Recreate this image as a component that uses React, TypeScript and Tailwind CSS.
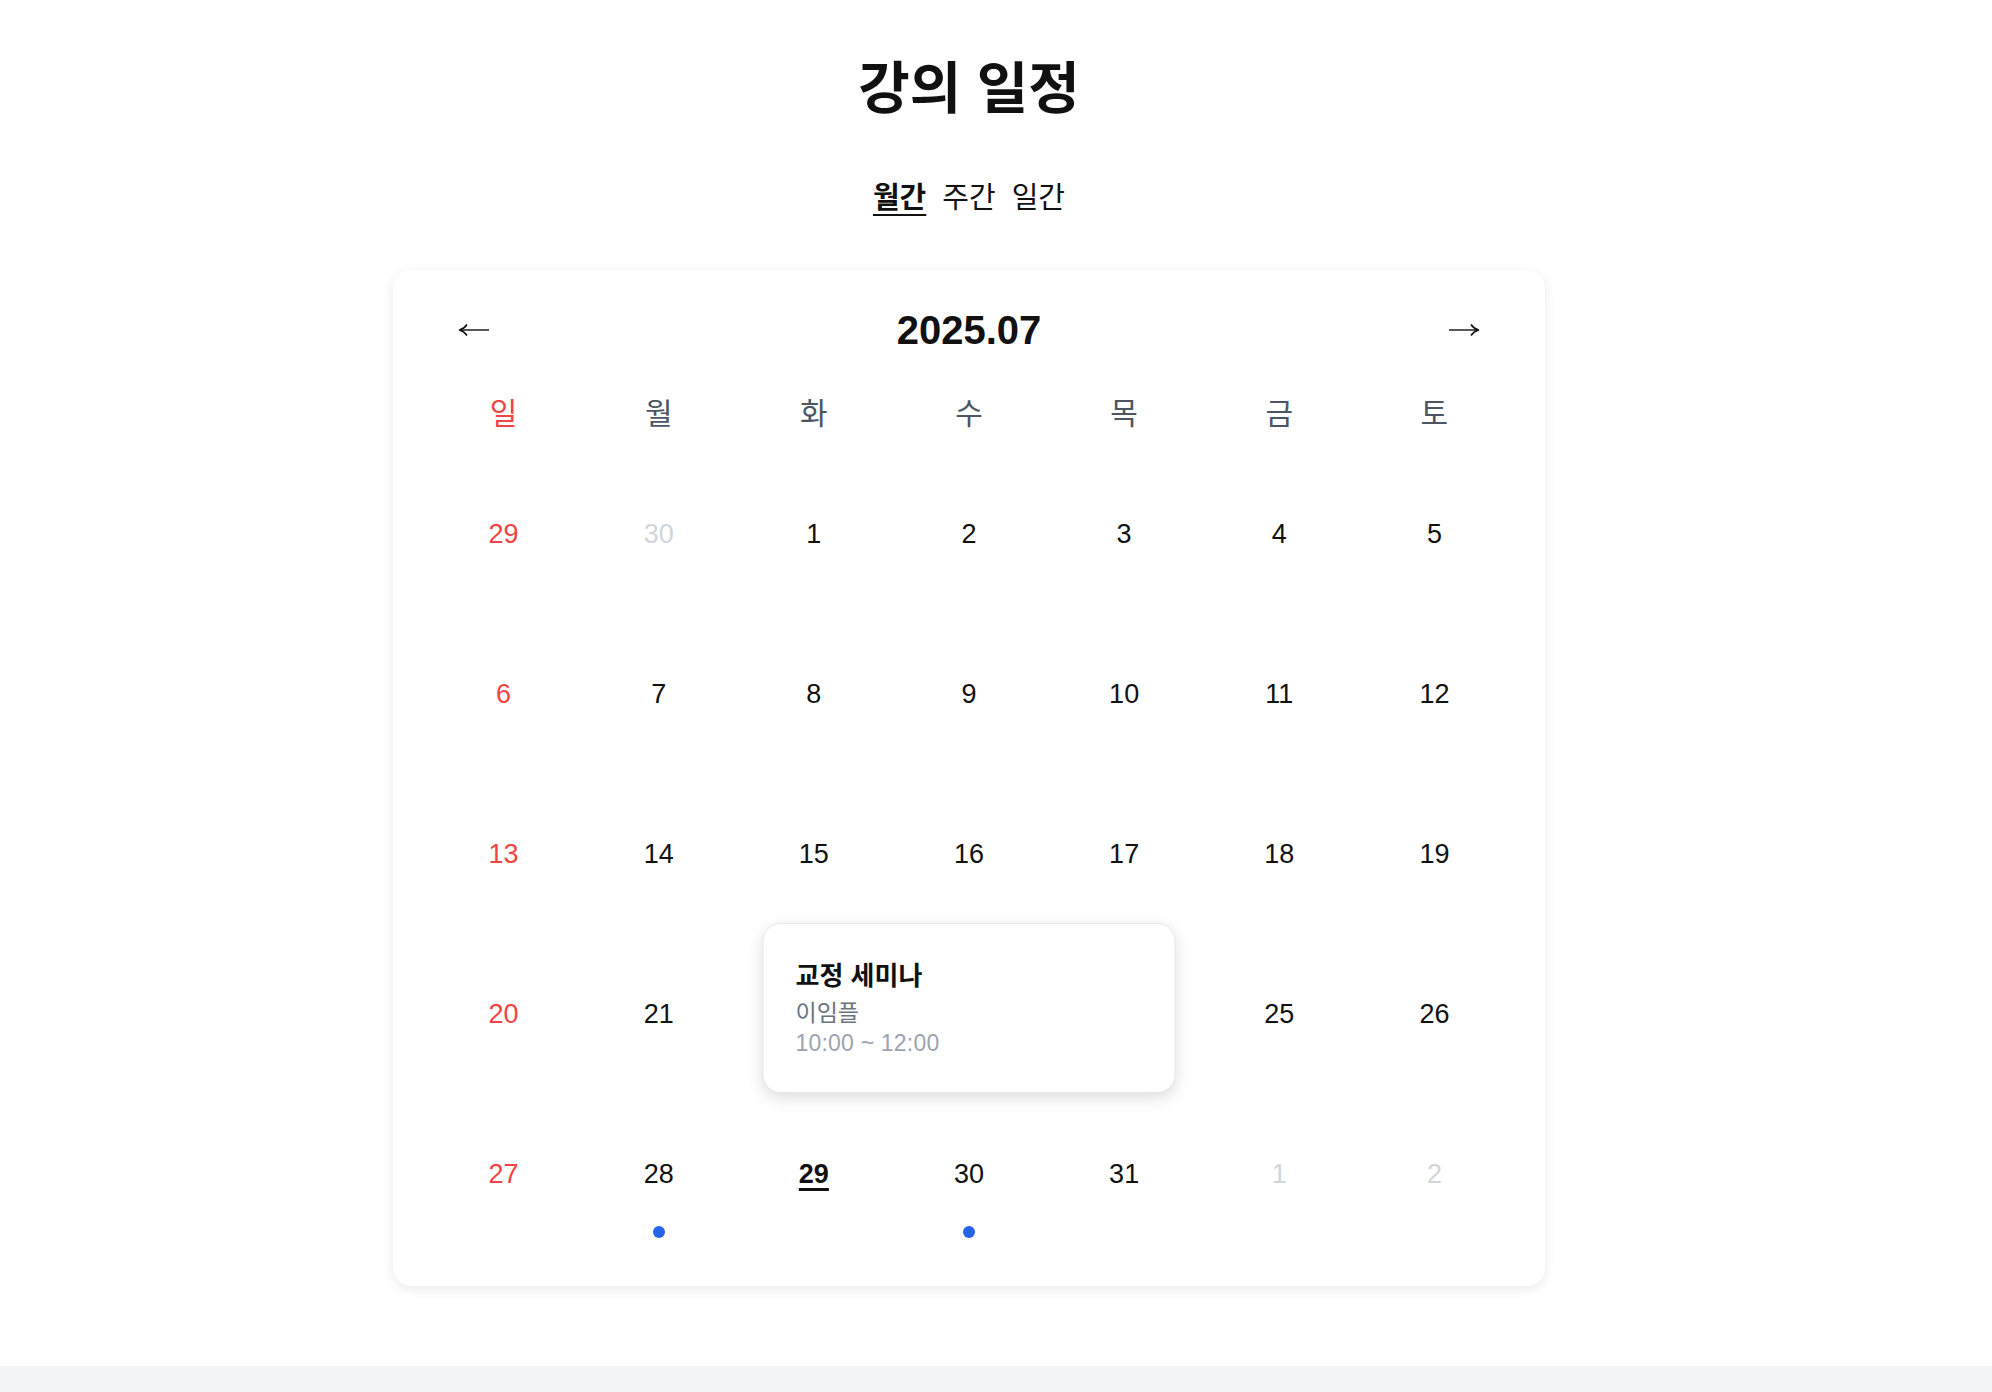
import React from 'react';

type Day = {
  n: number;
  muted?: boolean;
  sunday?: boolean;
  today?: boolean;
  dot?: boolean;
  popup?: boolean;
};

const weekdays = ['일', '월', '화', '수', '목', '금', '토'];

const weeks: Day[][] = [
  [{ n: 29, sunday: true }, { n: 30, muted: true }, { n: 1 }, { n: 2 }, { n: 3 }, { n: 4 }, { n: 5 }],
  [{ n: 6, sunday: true }, { n: 7 }, { n: 8 }, { n: 9 }, { n: 10 }, { n: 11 }, { n: 12 }],
  [{ n: 13, sunday: true }, { n: 14 }, { n: 15 }, { n: 16 }, { n: 17 }, { n: 18 }, { n: 19 }],
  [{ n: 20, sunday: true }, { n: 21 }, { n: 22 }, { n: 23, popup: true }, { n: 24 }, { n: 25 }, { n: 26 }],
  [
    { n: 27, sunday: true },
    { n: 28, dot: true },
    { n: 29, today: true },
    { n: 30, dot: true },
    { n: 31 },
    { n: 1, muted: true },
    { n: 2, muted: true },
  ],
];

function Arrow({ dir }: { dir: 'left' | 'right' }) {
  return (
    <svg
      width="32"
      height="14"
      viewBox="0 0 32 14"
      className={dir === 'right' ? 'rotate-180' : ''}
      fill="none"
      stroke="#111"
    >
      <path d="M2 7H31" strokeWidth="1.4" />
      <path d="M9 1.5Q6.5 5.5 1.5 7Q6.5 8.5 9 12.5" strokeWidth="1.6" strokeLinejoin="round" />
    </svg>
  );
}

function EventPopup() {
  return (
    <div className="absolute left-1/2 top-[-10px] z-10 h-[170px] w-[413px] -translate-x-1/2 rounded-[18px] border border-[#e5e7eb] bg-white px-[32px] pt-[33px] shadow-[0_5px_16px_rgba(0,0,0,0.13)]">
      <p className="text-[26px] font-bold leading-[38px] text-[#111]">교정 세미나</p>
      <p className="mt-[3px] text-[23px] leading-[30px] text-[#6b7280]">이임플</p>
      <p className="text-[23px] leading-[30px] tracking-[0.2px] text-[#9ca3af]">10:00 ~ 12:00</p>
    </div>
  );
}

function DayCell({ day }: { day: Day }) {
  const color = day.muted ? 'text-[#d1d5db]' : day.sunday ? 'text-[#ef4444]' : 'text-[#111]';
  return (
    <div className="relative flex h-[160px] flex-col items-center pt-[61px]">
      <span
        className={`text-[27px] leading-[40px] ${color} ${
          day.today ? 'font-bold underline decoration-[3px] underline-offset-[5px]' : ''
        }`}
      >
        {day.n}
      </span>
      {day.dot && <span className="mt-[32px] h-[12px] w-[12px] rounded-full bg-[#2563eb]" />}
      {day.popup && <EventPopup />}
    </div>
  );
}

export default function App() {
  return (
    <div className="min-h-screen bg-white font-['Liberation_Sans','Noto_Sans_CJK_KR',sans-serif] text-[#111]">
      <main className="flex flex-col items-center pb-[80px] pr-[54px] pt-[58px]">
        <h1 className="text-[56px] font-bold leading-[62px]">강의 일정</h1>

        <nav className="mt-[58px] flex items-center gap-[16px] text-[29px] leading-[40px]">
          <button className="font-bold underline decoration-2 underline-offset-[6px]">월간</button>
          <button>주간</button>
          <button>일간</button>
        </nav>

        <section className="mt-[52px] w-[1152px] rounded-[18px] bg-white p-[33px] shadow-[0_3px_12px_rgba(0,0,0,0.09)]">
          <div className="flex h-[54px] items-center justify-between px-[32px]">
            <button className="flex items-center">
              <Arrow dir="left" />
            </button>
            <h2 className="text-[40px] font-bold leading-[54px]">2025.07</h2>
            <button className="flex items-center">
              <Arrow dir="right" />
            </button>
          </div>

          <div className="mt-[37px] grid h-[40px] grid-cols-7">
            {weekdays.map((w, i) => (
              <div
                key={w}
                className={`text-center text-[30px] leading-[40px] ${i === 0 ? 'text-[#ef4444]' : 'text-[#4b5563]'}`}
              >
                {w}
              </div>
            ))}
          </div>

          <div className="mt-[19px] grid grid-cols-7">
            {weeks.flat().map((d, i) => (
              <DayCell key={i} day={d} />
            ))}
          </div>
        </section>
      </main>
      <footer className="h-[200px] bg-[#f3f4f6]" />
    </div>
  );
}
